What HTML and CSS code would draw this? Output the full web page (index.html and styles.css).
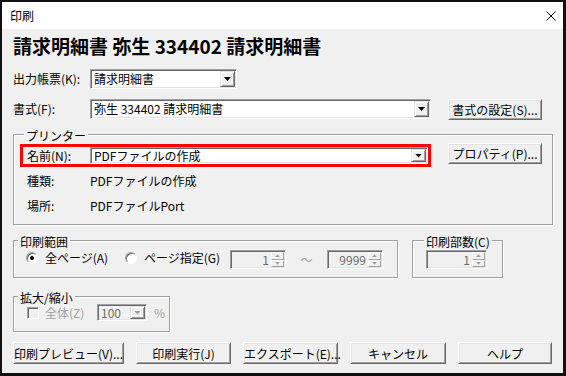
FILE: index.html
```html
<!DOCTYPE html>
<html lang="ja">
<head>
  <meta charset="UTF-8">
  <title>印刷</title>
  <meta name="viewport" content="width=device-width, initial-scale=1.0">
  <link rel="stylesheet" href="styles.css">
</head>
<body>

<div class="window">
  <div class="titlebar">
    <span class="title">印刷</span>
    <svg class="close" width="10" height="10" viewBox="0 0 10 10"><path d="M0.5 0.5L9.5 9.5M9.5 0.5L0.5 9.5" stroke="#000" stroke-width="1" fill="none"/></svg>
  </div>

  <div class="content">
    <h1 class="heading">請求明細書 弥生 334402 請求明細書</h1>

    <div class="row row-report">
      <span class="label">出力帳票(K):</span>
      <div class="combo combo-report">
        <span class="combo-text">請求明細書</span>
        <span class="drop"><span class="arrow"></span></span>
      </div>
    </div>

    <div class="row row-format">
      <span class="label">書式(F):</span>
      <div class="combo combo-format">
        <span class="combo-text">弥生 334402 請求明細書</span>
        <span class="drop"><span class="arrow"></span></span>
      </div>
      <button class="btn btn-side">書式の設定(S)...</button>
    </div>

    <div class="group group-printer">
      <span class="legend">プリンター</span>
      <div class="printer-row">
        <div class="highlight">
          <span class="label label-inner">名前(N):</span>
          <div class="combo combo-printer">
            <span class="combo-text">PDFファイルの作成</span>
            <span class="drop"><span class="arrow"></span></span>
          </div>
        </div>
        <button class="btn btn-side btn-prop">プロパティ(P)...</button>
      </div>
      <div class="info-row info-first">
        <span class="label label-inner">種類:</span>
        <span>PDFファイルの作成</span>
      </div>
      <div class="info-row info-second">
        <span class="label label-inner">場所:</span>
        <span>PDFファイルPort</span>
      </div>
    </div>

    <div class="group-row">
      <div class="group group-range">
        <span class="legend">印刷範囲</span>
        <div class="range-row">
          <span class="radio-item item-all"><span class="radio checked"></span>全ページ(A)</span>
          <span class="radio-item item-pages"><span class="radio"></span>ページ指定(G)</span>
          <div class="spin">
            <span class="spin-value">1</span>
            <span class="spin-btns"><span class="spin-btn"><span class="up"></span></span><span class="spin-btn"><span class="down"></span></span></span>
          </div>
          <span class="tilde">～</span>
          <div class="spin">
            <span class="spin-value">9999</span>
            <span class="spin-btns"><span class="spin-btn"><span class="up"></span></span><span class="spin-btn"><span class="down"></span></span></span>
          </div>
        </div>
      </div>

      <div class="group group-copies">
        <span class="legend legend-copies">印刷部数(C)</span>
        <div class="range-row copies-row">
          <div class="spin spin-copies">
            <span class="spin-value">1</span>
            <span class="spin-btns"><span class="spin-btn"><span class="up"></span></span><span class="spin-btn"><span class="down"></span></span></span>
          </div>
        </div>
      </div>
    </div>

    <div class="group group-zoom">
      <span class="legend">拡大/縮小</span>
      <div class="zoom-row">
        <span class="check-item"><span class="checkbox"></span>全体(Z)</span>
        <div class="combo combo-zoom">
          <span class="combo-text">100</span>
          <span class="drop"><span class="arrow"></span></span>
        </div>
        <span class="percent">%</span>
      </div>
    </div>

    <div class="actions">
      <button class="btn btn-preview">印刷プレビュー(V)...</button>
      <button class="btn btn-act">印刷実行(J)</button>
      <button class="btn btn-act">エクスポート(E)...</button>
      <button class="btn btn-cancel">キャンセル</button>
      <button class="btn btn-help">ヘルプ</button>
    </div>
  </div>
</div>

</body>
</html>
```

FILE: styles.css
```css
* {
  box-sizing: border-box;
}
body {
  margin: 0;
  font-family: "Noto Sans CJK JP", sans-serif;
  font-size: 12px;
  color: #000;
  background: #fff;
}
.window {
  width: 566px;
  height: 376px;
  border: solid #111;
  border-width: 2px 3px 3px 2px;
  background: #f0f0f0;
  display: flex;
  flex-direction: column;
}
.titlebar {
  height: 27px;
  flex: none;
  background: #fff;
  display: flex;
  align-items: center;
  justify-content: space-between;
  padding: 0 7px 0 8px;
}
.title {
  line-height: 16px;
}
.close {
  display: block;
}
.content {
  padding-left: 11px;
}
.heading {
  margin: 5px 0 0;
  height: 24px;
  font-size: 19px;
  font-weight: bold;
  line-height: 24px;
  white-space: nowrap;
}
.row {
  display: flex;
  align-items: flex-start;
}
.row-report {
  margin-top: 11px;
  height: 20px;
}
.row-format {
  margin-top: 10px;
  height: 21px;
}
.label {
  width: 77px;
  flex: none;
  line-height: 20px;
  white-space: nowrap;
}
.label-inner {
  width: 63px;
}

/* sunken combo box */
.combo {
  height: 20px;
  flex: none;
  display: flex;
  align-items: center;
  padding: 1px;
  background: #fff;
  border: 1px solid;
  border-color: #a0a0a0 #fff #fff #a0a0a0;
  box-shadow: inset 1px 1px 0 #696969, inset -1px -1px 0 #e3e3e3;
}
.combo-text {
  flex: 1;
  padding-left: 2px;
  line-height: 16px;
  white-space: nowrap;
}
.drop {
  width: 15px;
  height: 16px;
  flex: none;
  display: flex;
  align-items: center;
  justify-content: center;
  background: #f0f0f0;
  border: 1px solid;
  border-color: #e3e3e3 #696969 #696969 #e3e3e3;
  box-shadow: inset 1px 1px 0 #fff, inset -1px -1px 0 #a0a0a0;
}
.arrow {
  width: 7px;
  height: 4px;
  background: #000;
  clip-path: polygon(0 0, 100% 0, 50% 100%);
}
.combo-report {
  width: 147px;
}
.combo-format {
  width: 341px;
}
.combo-printer {
  flex: 1;
  height: 17px;
}
.combo-printer .drop {
  height: 13px;
}

/* raised push button */
.btn {
  font: inherit;
  color: #000;
  padding: 0;
  background: #f0f0f0;
  border: 1px solid;
  border-color: #fff #696969 #696969 #fff;
  box-shadow: inset 1px 1px 0 #e3e3e3, inset -1px -1px 0 #a0a0a0;
  white-space: nowrap;
}
.btn-side {
  width: 94px;
  height: 21px;
  margin-left: 17px;
}
.btn-prop {
  margin-top: -1px;
}

/* etched group frame */
.group {
  border: 1px solid #a0a0a0;
  box-shadow: 1px 1px 0 #fff, inset 1px 1px 0 #fff;
}
.legend {
  display: table;
  margin: -7px 0 0 4px;
  padding: 0 2px;
  line-height: 15px;
  background: #f0f0f0;
}
.group-printer {
  width: 540px;
  margin-top: 14px;
  padding: 0 0 8px 6px;
}
.printer-row {
  display: flex;
  align-items: flex-start;
  margin-top: 1px;
}
.highlight {
  width: 411px;
  height: 23px;
  flex: none;
  display: flex;
  align-items: center;
  padding-left: 4px;
  border: 3px solid #f00;
}
.info-row {
  display: flex;
  height: 20px;
  line-height: 20px;
  padding-left: 7px;
}
.info-first {
  margin-top: 4px;
}
.info-second {
  margin-top: 5px;
}

.group-row {
  display: flex;
  align-items: flex-start;
  margin-top: 15px;
}
.group-range {
  width: 385px;
  padding-bottom: 8px;
}
.group-copies {
  width: 91px;
  margin-left: 14px;
  padding-bottom: 8px;
}
.legend-copies {
  margin-left: 11px;
}
.range-row {
  display: flex;
  align-items: flex-start;
  height: 19px;
  margin-top: 1px;
  padding-left: 12px;
}
.copies-row {
  padding-left: 13px;
}
.radio-item {
  display: flex;
  align-items: center;
  gap: 7px;
  height: 16px;
  line-height: 16px;
  white-space: nowrap;
}
.item-all {
  width: 99px;
}
.item-pages {
  width: 105px;
}
.radio {
  width: 12px;
  height: 12px;
  flex: none;
  border-radius: 50%;
  display: flex;
  align-items: center;
  justify-content: center;
  background: #fff;
  border: 1px solid;
  border-color: #a0a0a0 #fff #fff #a0a0a0;
  box-shadow: inset 1px 1px 0 #696969;
}
.radio.checked::after {
  content: "";
  width: 4px;
  height: 4px;
  border-radius: 50%;
  background: #000;
}

/* disabled spin box */
.spin {
  width: 56px;
  height: 19px;
  flex: none;
  display: flex;
  align-items: stretch;
  padding: 1px;
  background: #f0f0f0;
  border: 1px solid;
  border-color: #a0a0a0 #fff #fff #a0a0a0;
  box-shadow: inset 1px 1px 0 #696969, inset -1px -1px 0 #e3e3e3;
}
.spin-copies {
  width: 61px;
}
.spin-value {
  flex: 1;
  text-align: right;
  padding-right: 2px;
  line-height: 15px;
  color: #6d6d6d;
}
.spin-btns {
  width: 13px;
  display: flex;
  flex-direction: column;
}
.spin-btn {
  flex: 1;
  display: flex;
  align-items: center;
  justify-content: center;
  background: #f0f0f0;
  border: 1px solid;
  border-color: #fff #a0a0a0 #a0a0a0 #fff;
}
.up, .down {
  width: 5px;
  height: 3px;
  background: #a0a0a0;
}
.up {
  clip-path: polygon(50% 0, 100% 100%, 0 100%);
}
.down {
  clip-path: polygon(0 0, 100% 0, 50% 100%);
}
.tilde {
  width: 41px;
  flex: none;
  text-align: center;
  line-height: 19px;
  color: #a0a0a0;
}

.group-zoom {
  width: 157px;
  margin-top: 18px;
  padding-bottom: 10px;
}
.zoom-row {
  display: flex;
  align-items: center;
  height: 17px;
  margin-top: -1px;
  padding-left: 13px;
}
.check-item {
  width: 70px;
  flex: none;
  display: flex;
  align-items: center;
  gap: 6px;
  color: #a0a0a0;
  white-space: nowrap;
}
.checkbox {
  width: 12px;
  height: 12px;
  flex: none;
  background: #f0f0f0;
  border: 1px solid;
  border-color: #a0a0a0 #fff #fff #a0a0a0;
  box-shadow: inset 1px 1px 0 #696969;
}
.combo-zoom {
  width: 50px;
  height: 17px;
  background: #f0f0f0;
}
.combo-zoom .combo-text {
  color: #6d6d6d;
  line-height: 13px;
}
.combo-zoom .drop {
  height: 13px;
}
.combo-zoom .arrow {
  background: #a0a0a0;
}
.percent {
  margin-left: 7px;
  color: #a0a0a0;
}

.actions {
  display: flex;
  gap: 12px;
  margin-top: 10px;
}
.actions .btn {
  height: 22px;
}
.btn-preview {
  width: 111px;
}
.btn-act {
  width: 95px;
}
.btn-cancel {
  width: 96px;
}
.btn-help {
  width: 94px;
}
```
